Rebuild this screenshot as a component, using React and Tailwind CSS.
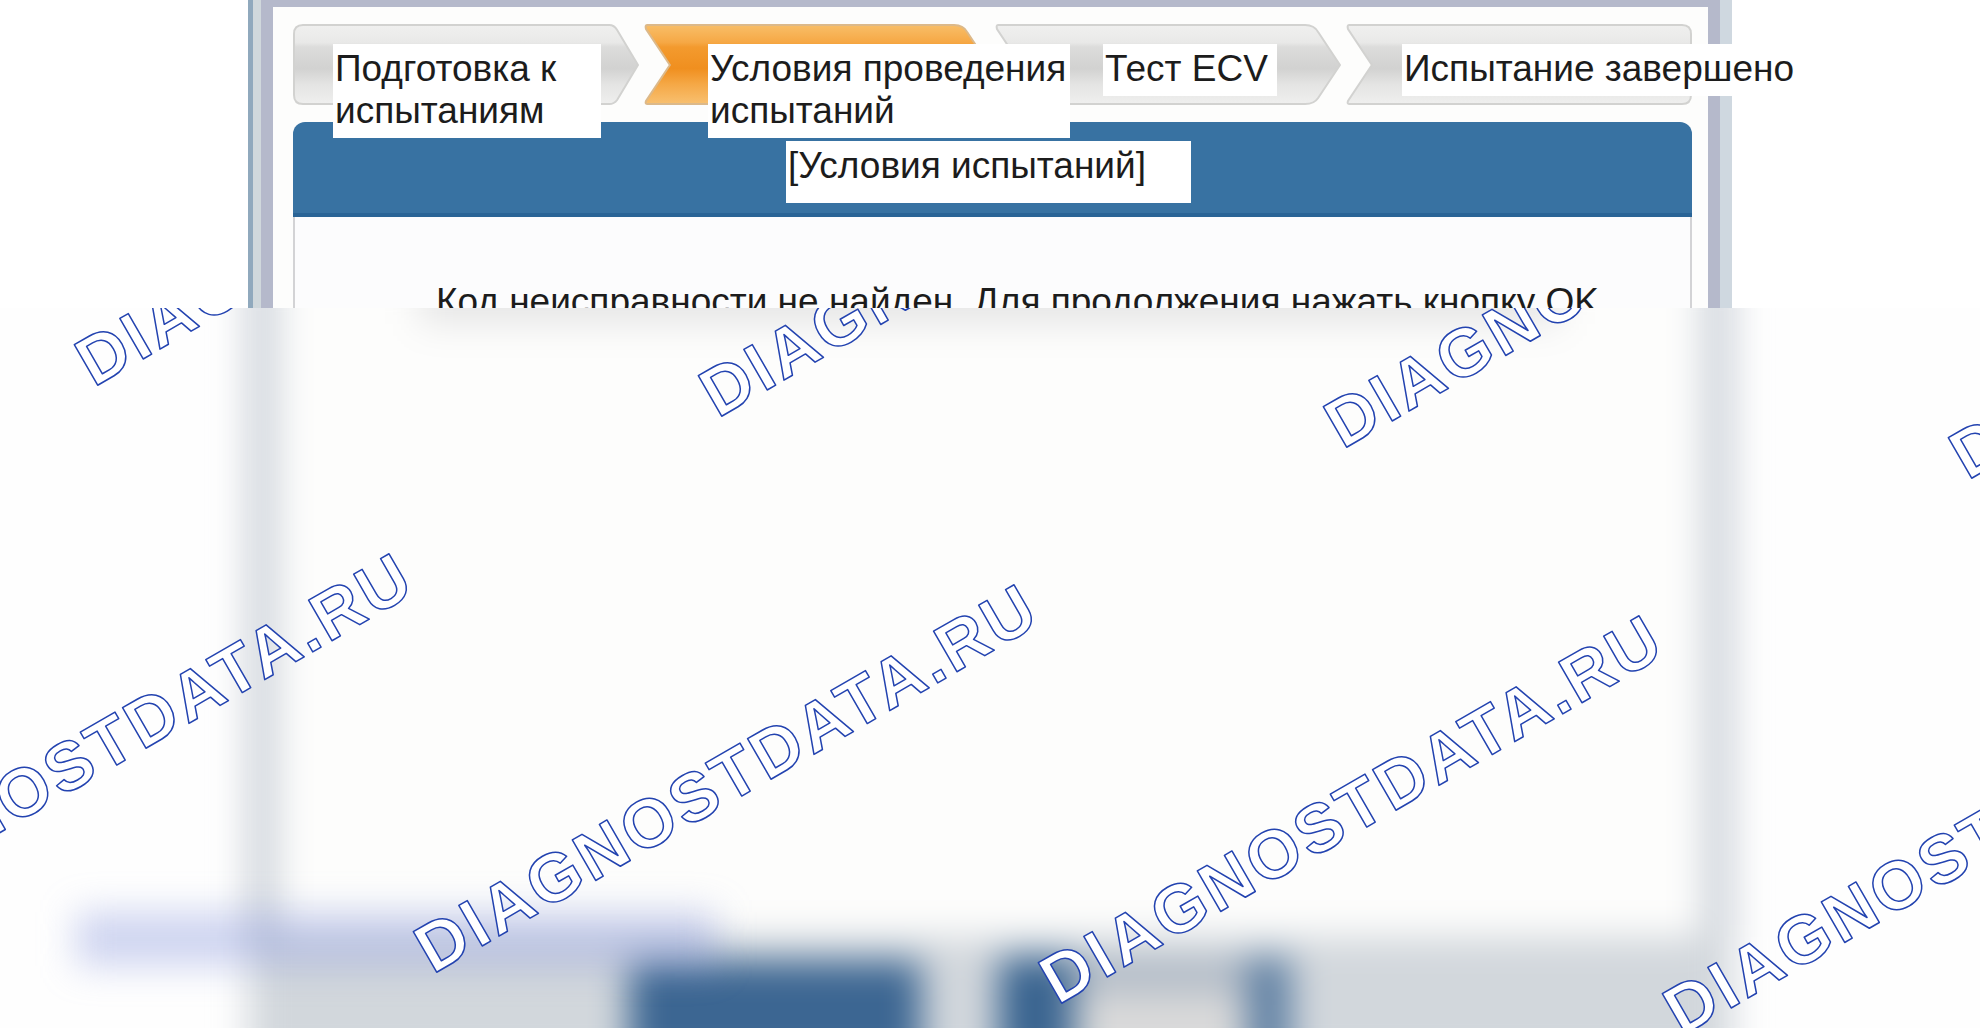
const steps = [
  { id: 'prep', text: 'Подготовка к испытаниям', shape: 'first', pad: 'pl-10', box: 'w-[268px] h-[94px]' },
  { id: 'cond', text: 'Условия проведения испытаний', shape: 'middle', pad: 'pl-16', box: 'w-[362px] h-[94px]', active: true },
  { id: 'ecv', text: 'Тест ECV', shape: 'middle', pad: 'pl-27', box: 'w-[174px] h-[52px]' },
  { id: 'done', text: 'Испытание завершено', shape: 'last', pad: 'pl-14', box: 'w-[420px] h-[52px]' },
];

const shapes = {
  first: 'M10 1 H318 Q323 1 326 6 L347 41 L326 76 Q323 80 318 80 H10 Q1 80 1 71 V10 Q1 1 10 1 Z',
  middle: 'M3 1 H312 Q321 1 325 8 L347 41 L325 74 Q321 80 312 80 H3 Q1 80 2 77 L26 41 L2 5 Q1 1 3 1 Z',
  last: 'M3 1 H338 Q347 1 347 10 V71 Q347 80 338 80 H3 Q1 80 2 77 L26 41 L2 5 Q1 1 3 1 Z',
};

// bottom left corner of every stamp
const stamps = [
  [98, 385],
  [722, 416],
  [1347, 447],
  [1972, 478],
  [-188, 941],
  [437, 972],
  [1062, 1003],
  [1686, 1034],
];

const Step = ({ step }) => (
  <li className={`relative h-[82px] pt-5 ${step.pad}`} aria-current={step.active ? 'step' : undefined}>
    <svg className="absolute inset-0 h-full w-full" viewBox="0 0 348 82" preserveAspectRatio="none" aria-hidden="true">
      <defs>
        <linearGradient id={`fill-${step.id}`} x1="0" y1="0" x2="0" y2="1">
          <stop offset="0" stopColor={step.active ? '#f8be68' : '#f0f0ef'} />
          <stop offset="0.22" stopColor={step.active ? '#f6a845' : '#e9e9e8'} />
          <stop offset="0.28" stopColor={step.active ? '#f39a2e' : '#dcdcdb'} />
          <stop offset="0.55" stopColor={step.active ? '#f08f1f' : '#d2d2d1'} />
          <stop offset="0.75" stopColor={step.active ? '#f5a846' : '#e4e4e3'} />
          <stop offset="1" stopColor={step.active ? '#f8c070' : '#efefee'} />
        </linearGradient>
      </defs>
      <path d={shapes[step.shape]} fill={`url(#fill-${step.id})`} stroke={step.active ? '#dcb98a' : '#d2d2d0'} strokeWidth="2" />
    </svg>
    <div className={`relative z-10 bg-white pl-0.5 pt-1 text-[37px] leading-[42px] ${step.box}`}>{step.text}</div>
  </li>
);

const Frame = ({ children }) => (
  <div className="flex flex-1 border-l-[5px] border-[#90a9bd]">
    <div className="w-2 bg-[#d0d8dc]" />
    <div className="w-3 bg-[#b5b9cb]" />
    {children}
    <div className="w-3 bg-[#b5b9cb]" />
    <div className="w-3 bg-[#cfd8e0]" />
  </div>
);

const Watermark = () => (
  <svg className="pointer-events-none absolute inset-0 h-full w-full" aria-hidden="true">
    <g transform="translate(0 -308)" className="fill-white stroke-[#2343b0] font-bold tracking-wider" fontSize="68" strokeWidth="1.5" strokeLinejoin="round">
      {stamps.map(([x, y]) => (
        <text key={`${x}-${y}`} transform={`translate(${x} ${y}) rotate(-30)`} x="-5">
          DIAGNOSTDATA.RU
        </text>
      ))}
    </g>
  </svg>
);

const App = () => (
  <div className="flex min-h-screen flex-col overflow-hidden bg-white font-['Liberation_Sans',Arial,sans-serif] text-[#1c1c1c]">
    <header className="flex h-[308px] px-62">
      <Frame>
        <div className="min-w-0 flex-1 border-t-[7px] border-[#b5b9cb] bg-[#fdfdfc] pl-5 pr-4 pt-[17px]">
          <ol className="grid grid-cols-4 gap-x-[5px]">
            {steps.map((step) => (
              <Step key={step.id} step={step} />
            ))}
          </ol>
          <div className="mt-4 h-[95px] rounded-t-xl border-b-4 border-[#2a6496] bg-[#3872a2] pr-2 pt-[19px]">
            <h1 className="mx-auto h-[62px] w-[405px] bg-white pl-0.5 pt-1 text-[37px] leading-[42px]">[Условия испытаний]</h1>
          </div>
          <div className="h-[91px] overflow-hidden border-x-2 border-[#d3d3d5] bg-[#fcfcfd] pl-[141px] pt-16">
            <p className="whitespace-nowrap text-[37px] leading-[42px]">Код неисправности не найден. Для продолжения нажать кнопку OK</p>
          </div>
        </div>
      </Frame>
    </header>

    <main className="relative flex min-h-[720px] flex-1 flex-col overflow-hidden bg-[#fefefe]">
      <div className="-my-10 flex flex-1 flex-col px-[248px] blur-[18px]">
        <div className="flex flex-1 border-x-28 border-[#c8ced6] bg-[#fdfdfc]">
          <div className="mx-auto h-14 w-4/5 bg-[#e6e6e6]" />
        </div>
        <footer className="flex h-[131px] bg-[#d2d7dc]">
          <button type="button" aria-label="OK" className="ml-[381px] mt-6 w-[292px] bg-[#3c6692]" />
          <button type="button" aria-label="Отмена" className="ml-[78px] mt-5 flex w-[292px] bg-linear-to-r from-[#34608d] to-[#5f80a3]">
            <span className="ml-19 mr-11 h-full flex-1 border-t-[36px] border-[#b0bac6] bg-[#dadada]" />
          </button>
        </footer>
      </div>
      <div className="absolute bottom-[62px] left-[76px] h-[54px] w-[640px] bg-[#8797dc]/40 blur-[18px]" />
      <Watermark />
    </main>
  </div>
);

export default App;
